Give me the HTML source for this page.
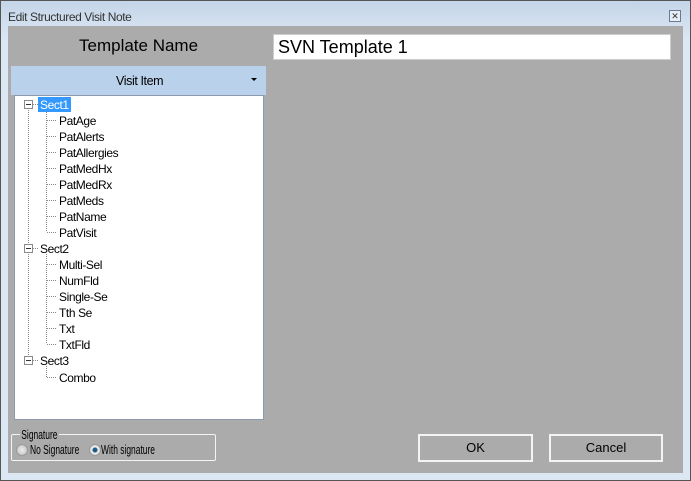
<!DOCTYPE html>
<html><head><style>
*{margin:0;padding:0;box-sizing:border-box}
body{width:691px;height:481px;background:#dbe6f3;font-family:"Liberation Sans",sans-serif;position:relative;overflow:hidden}
.abs{position:absolute}
.t{font-size:12px;color:#000;position:absolute;letter-spacing:-0.4px;white-space:nowrap}
.n{transform:scaleX(0.65);transform-origin:0 0;font-size:13px}
</style></head><body>
<div class="abs" style="left:0;top:0;width:691px;height:481px;border:1px solid #555;background:linear-gradient(#c4d5e8,#dce7f4 40px,#dce7f4)"></div>
<div class="t" style="left:8px;top:10px;font-size:12px;color:#333">Edit Structured Visit Note</div>
<div class="abs" style="left:669px;top:10px;width:12px;height:12px;border:1px solid #6a7a95;background:#e8eef6;font-size:9px;line-height:10px;text-align:center;color:#333">✕</div>
<div class="abs" style="left:8px;top:26px;width:675px;height:447px;background:#ababab"></div>
<div class="abs" style="left:79px;top:36px;font-size:17px;color:#000">Template Name</div>
<div class="abs" style="left:273px;top:34px;width:398px;height:26px;background:#fff;border:1px solid #ccc;font-size:18px;padding:2px 4px;line-height:20px">SVN Template 1</div>
<div class="abs" style="left:11px;top:66px;width:255px;height:29px;background:#b9d1ea"></div>
<div class="t" style="left:116px;top:74px;font-size:12.5px">Visit Item</div>
<div class="abs" style="left:251px;top:78px;border-left:3px solid transparent;border-right:3px solid transparent;border-top:3px solid #000"></div>
<div class="abs" style="left:14px;top:95px;width:250px;height:325px;background:#fff;border:1px solid #8a9bb0"></div>
<svg class="abs" style="left:0;top:0" width="300" height="400">
<g stroke="#888" stroke-dasharray="1,1" fill="none">
<line x1="28.5" y1="110" x2="28.5" y2="360"/>
<line x1="46.5" y1="110" x2="46.5" y2="232"/>
<line x1="46.5" y1="254" x2="46.5" y2="344"/>
<line x1="46.5" y1="366" x2="46.5" y2="377"/>
<line x1="33" y1="104.5" x2="38" y2="104.5"/>
<line x1="33" y1="248.5" x2="38" y2="248.5"/>
<line x1="33" y1="360.5" x2="38" y2="360.5"/>
</g>
<g stroke="#888" stroke-dasharray="1,1">
<line x1="47" y1="120.5" x2="57" y2="120.5"/><line x1="47" y1="136.5" x2="57" y2="136.5"/><line x1="47" y1="152.5" x2="57" y2="152.5"/><line x1="47" y1="168.5" x2="57" y2="168.5"/><line x1="47" y1="184.5" x2="57" y2="184.5"/><line x1="47" y1="200.5" x2="57" y2="200.5"/><line x1="47" y1="216.5" x2="57" y2="216.5"/><line x1="47" y1="232.5" x2="57" y2="232.5"/>
<line x1="47" y1="264.5" x2="57" y2="264.5"/><line x1="47" y1="280.5" x2="57" y2="280.5"/><line x1="47" y1="296.5" x2="57" y2="296.5"/><line x1="47" y1="312.5" x2="57" y2="312.5"/><line x1="47" y1="328.5" x2="57" y2="328.5"/><line x1="47" y1="344.5" x2="57" y2="344.5"/><line x1="47" y1="377.5" x2="57" y2="377.5"/>
</g>
<g fill="#fff" stroke="#8a8a8a">
<rect x="24.5" y="100.5" width="8" height="8"/><rect x="24.5" y="244.5" width="8" height="8"/><rect x="24.5" y="356.5" width="8" height="8"/>
</g>
<g stroke="#333"><line x1="26" y1="104.5" x2="31" y2="104.5"/><line x1="26" y1="248.5" x2="31" y2="248.5"/><line x1="26" y1="360.5" x2="31" y2="360.5"/></g>
</svg>
<div class="abs" style="left:38px;top:97px;width:33px;height:15px;background:#3399ff"></div>
<div class="t" style="left:40px;top:98px;color:#fff">Sect1</div>
<div class="t" style="left:59px;top:114px">PatAge</div>
<div class="t" style="left:59px;top:130px">PatAlerts</div>
<div class="t" style="left:59px;top:146px">PatAllergies</div>
<div class="t" style="left:59px;top:162px">PatMedHx</div>
<div class="t" style="left:59px;top:178px">PatMedRx</div>
<div class="t" style="left:59px;top:194px">PatMeds</div>
<div class="t" style="left:59px;top:210px">PatName</div>
<div class="t" style="left:59px;top:226px">PatVisit</div>
<div class="t" style="left:40px;top:242px">Sect2</div>
<div class="t" style="left:59px;top:258px">Multi-Sel</div>
<div class="t" style="left:59px;top:274px">NumFld</div>
<div class="t" style="left:59px;top:290px">Single-Se</div>
<div class="t" style="left:59px;top:306px">Tth Se</div>
<div class="t" style="left:59px;top:322px">Txt</div>
<div class="t" style="left:59px;top:338px">TxtFld</div>
<div class="t" style="left:40px;top:354px">Sect3</div>
<div class="t" style="left:59px;top:371px">Combo</div>
<div class="abs" style="left:11px;top:434px;width:205px;height:27px;border:1px solid #f4f4f4;border-radius:2px"></div>
<div class="t n" style="left:20px;top:427px;background:#ababab;padding:0 2px;letter-spacing:0">Signature</div>
<div class="abs" style="left:16px;top:444px;width:12px;height:12px;border-radius:50%;background:radial-gradient(#eee,#bbb);border:1px solid #999"></div>
<div class="t n" style="left:30px;top:442px;letter-spacing:0">No Signature</div>
<div class="abs" style="left:89px;top:444px;width:12px;height:12px;border-radius:50%;background:radial-gradient(#1d5a8a 2px,#eee 3px,#ccc);border:1px solid #999"></div>
<div class="t n" style="left:101px;top:442px;letter-spacing:0">With signature</div>
<div class="abs" style="left:418px;top:434px;width:115px;height:28px;border:2px solid #f4f4f4;font-size:13px;text-align:center;line-height:24px">OK</div>
<div class="abs" style="left:549px;top:434px;width:114px;height:28px;border:2px solid #f4f4f4;font-size:13px;text-align:center;line-height:24px">Cancel</div>
</body></html>
